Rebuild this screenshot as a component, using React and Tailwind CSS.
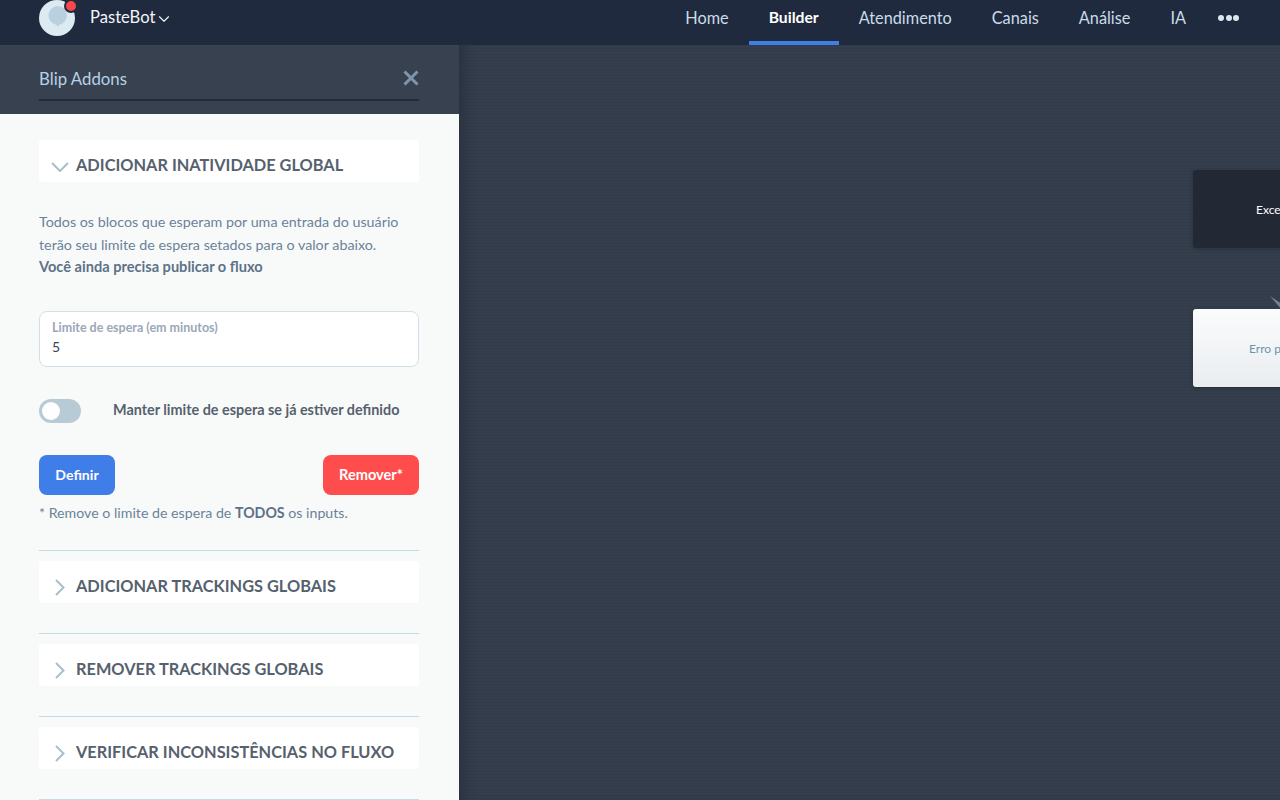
import { ChevronDown } from 'lucide-react';

const font = "font-['Lato','Open_Sans',sans-serif]";

const navItems = ['Home', 'Builder', 'Atendimento', 'Canais', 'Análise', 'IA'];

function Logo() {
  return (
    <div className="relative -mt-[10px] h-9 w-9 rounded-full bg-[#DCEBF1]">
      <svg viewBox="0 0 36 36" className="absolute inset-0 h-9 w-9">
        <path d="M19 6a9.5 9.5 0 0 0-2 18.8l2.6 2.2.6-2.2A9.5 9.5 0 0 0 19 6z" fill="#B9D0DE" />
      </svg>
      <span className="absolute -right-[3px] -top-[1px] box-content h-[10px] w-[10px] rounded-full border-2 border-[#202A3E] bg-[#F9484A]" />
    </div>
  );
}

function TopBar() {
  return (
    <header className="flex h-[45px] shrink-0 items-center justify-between bg-[#202A3E] pl-[39px] pr-[41px]">
      <div className="flex items-center">
        <Logo />
        <span className="-mt-[10px] ml-[15px] text-[16.6px] text-[#F3F6F8]">PasteBot</span>
        <ChevronDown className="-mt-[7px] h-[18px] w-[18px] text-[#F3F6F8]" strokeWidth={1.5} />
      </div>
      <nav className="flex h-full items-start">
        {navItems.map((item) => (
          <a
            key={item}
            className={
              item === 'Builder'
                ? 'h-full border-b-[4px] border-[#3F7DE8] px-5 pt-[6px] text-[15.7px] font-bold text-white'
                : 'h-full px-5 pt-[6px] text-[16.3px] text-[#C9DCE8]'
            }
          >
            {item}
          </a>
        ))}
        <div className="ml-[12px] mt-[15px] flex gap-[1.5px]">
          <span className="h-[6px] w-[6px] rounded-full bg-[#DCE8F0]" />
          <span className="h-[6px] w-[6px] rounded-full bg-[#DCE8F0]" />
          <span className="h-[6px] w-[6px] rounded-full bg-[#DCE8F0]" />
        </div>
      </nav>
    </header>
  );
}

function SectionCard({ title, open }) {
  return (
    <div className="flex h-[42px] items-start rounded-[3px] bg-white pt-[14px]">
      {open ? (
        <svg viewBox="0 0 18 10" className="ml-[12px] mt-[8px] h-[10px] w-[18px] shrink-0" fill="none" stroke="#A9BFC8" strokeWidth="2">
          <path d="M1 1l8 8 8-8" />
        </svg>
      ) : (
        <svg viewBox="0 0 10 17" className="ml-[16px] mt-[4px] h-[17px] w-[10px] shrink-0" fill="none" stroke="#A9BFC8" strokeWidth="2">
          <path d="M1 1l7.5 7.5L1 16" />
        </svg>
      )}
      <h3 className={`${open ? 'ml-[7px]' : 'ml-[11px]'} text-[16.35px] font-bold uppercase leading-[22px] text-[#56616E]`}>{title}</h3>
    </div>
  );
}

function Sidebar() {
  return (
    <aside className="flex w-[459px] shrink-0 flex-col bg-[#F8FAF9]">
      <div className="h-[69px] shrink-0 bg-[#374150] pl-[39px] pr-[40px] pt-[20px]">
        <div className="flex h-[36px] items-center justify-between border-b-2 border-[#232A38] pb-[6px]">
          <span className="text-[16.8px] text-[#B5D3E6]">Blip Addons</span>
          <svg viewBox="0 0 16 16" className="-mt-[3px] h-[16px] w-[16px]" fill="none" stroke="#7E95AA" strokeWidth="3">
            <path d="M1.5 1.5l13 13M14.5 1.5l-13 13" />
          </svg>
        </div>
      </div>

      <div className="flex flex-col pl-[39px] pr-[40px] pt-[26px]">
        <SectionCard title="Adicionar inatividade global" open />

        <p className="mt-[29px] text-[14.3px] leading-[22.5px] text-[#6B8299]">
          Todos os blocos que esperam por uma entrada do usuário
          <br />
          terão seu limite de espera setados para o valor abaixo.
          <br />
          <b className="text-[14.6px] font-bold text-[#5D7289]">Você ainda precisa publicar o fluxo</b>
        </p>

        <div className="mt-[32px] h-[56px] rounded-[8px] border border-[#D3DFE8] bg-white px-3 pt-[9px]">
          <div className="text-[12.5px] font-bold leading-[14px] text-[#9AA8B8]">Limite de espera (em minutos)</div>
          <div className="mt-[3px] text-[14px] leading-[18px] text-[#3A4452]">5</div>
        </div>

        <div className="mt-[32px] flex h-[24px] items-center">
          <div className="flex h-[24px] w-[42px] items-center rounded-full bg-[#B8CBD4] pl-[3px]">
            <span className="h-[18px] w-[18px] rounded-full bg-white" />
          </div>
          <span className="-mt-[2px] ml-[32px] text-[14.4px] font-bold text-[#56616E]">Manter limite de espera se já estiver definido</span>
        </div>

        <div className="mt-[32px] flex justify-between">
          <button className="h-[40px] w-[76px] rounded-[8px] bg-[#3F7DE8] text-[14.1px] font-bold text-white">Definir</button>
          <button className="h-[40px] w-[96px] rounded-[8px] bg-[#FF4D4D] text-[14.6px] font-bold text-white">Remover*</button>
        </div>

        <p className="mt-[9px] text-[14.2px] leading-[18px] text-[#6B8299]">
          * Remove o limite de espera de <b className="font-bold text-[#5D7289]">TODOS</b> os inputs.
        </p>

        <div className="mt-[28px] border-t border-[#C5DAE2] pt-[10px]">
          <SectionCard title="Adicionar trackings globais" />
        </div>
        <div className="mt-[30px] border-t border-[#C5DAE2] pt-[10px]">
          <SectionCard title="Remover trackings globais" />
        </div>
        <div className="mt-[30px] border-t border-[#C5DAE2] pt-[10px]">
          <SectionCard title="Verificar inconsistências no fluxo" />
        </div>
        <div className="mt-[30px] border-t border-[#C5DAE2]" />
      </div>
    </aside>
  );
}

function Canvas() {
  return (
    <main className="relative flex-1 overflow-hidden bg-[#353E4C] bg-[linear-gradient(#323B49_1px,transparent_1px)] bg-[size:3px_3px] shadow-[inset_14px_0_14px_-10px_rgba(20,26,38,0.35)]">
      <div className="absolute left-[734px] top-[125px] h-[78px] w-[240px] rounded-[3px] bg-[#222935] pl-[63px] pt-[31px] text-[12px] text-white shadow-[0_1px_4px_rgba(0,0,0,0.25)]">
        Exceções
      </div>
      <svg className="absolute left-[811px] top-[251px] h-[14px] w-[12px]" viewBox="0 0 12 14">
        <path d="M0 0l12 8v6z" fill="#79838F" />
      </svg>
      <div className="absolute left-[734px] top-[264px] h-[78px] w-[240px] rounded-[3px] bg-gradient-to-b from-[#FBFCFC] to-[#E9EDF0] pl-[56px] pt-[31px] text-[12px] text-[#6A94AE] shadow-[0_1px_4px_rgba(0,0,0,0.25)]">
        Erro padrão
      </div>
    </main>
  );
}

export default function App() {
  return (
    <div className={`flex h-[800px] w-[1280px] flex-col overflow-hidden ${font}`}>
      <TopBar />
      <div className="flex min-h-0 flex-1">
        <Sidebar />
        <Canvas />
      </div>
    </div>
  );
}
